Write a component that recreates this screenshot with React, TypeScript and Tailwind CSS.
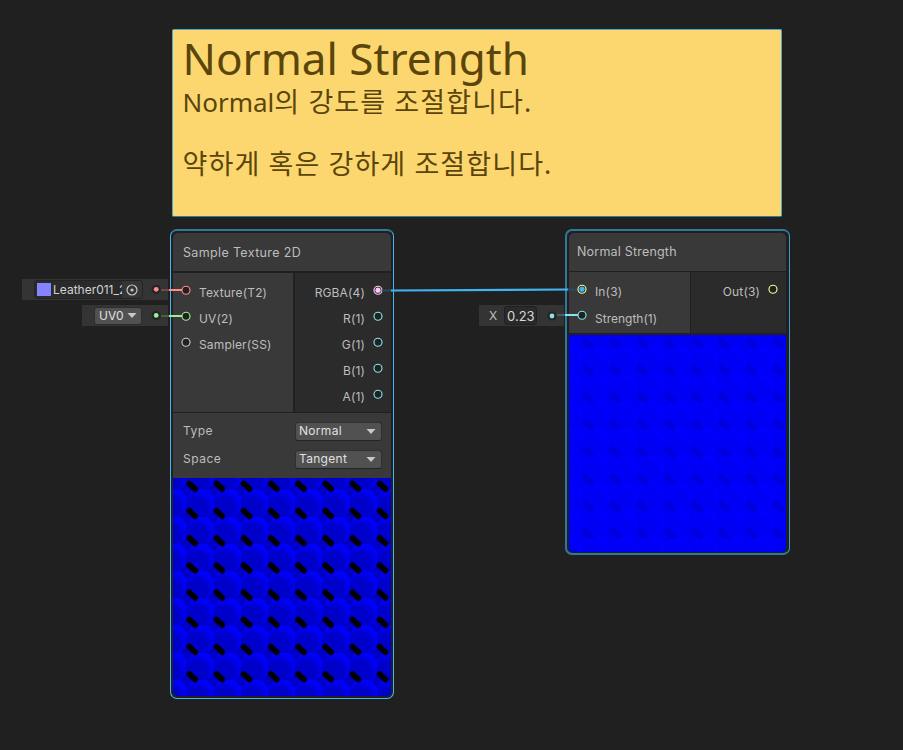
import type { ReactNode } from "react";

const RED = "#ff8b8b";
const GREEN = "#9aef92";
const CYAN = "#84e4e7";
const YELLOW = "#f6ff9a";
const PINK = "#fbcbf4";

function Ring({ color, fill }: { color: string; fill?: string }) {
  return (
    <svg width="10" height="10" viewBox="0 0 10 10" className="shrink-0 overflow-visible">
      <circle cx="5" cy="5.2" r="4" fill="#212121" stroke={color} strokeWidth="1.15" />
      {fill && <circle cx="5" cy="5.2" r="2.6" fill={fill} />}
    </svg>
  );
}

function Label({ children, className = "text-[12px] tracking-[0.15px]" }: { children: ReactNode; className?: string }) {
  return <span className={`whitespace-nowrap leading-[16px] text-[#bdbdbd] ${className}`}>{children}</span>;
}

function InPort({ color, fill, label, className }: { color: string; fill?: string; label: string; className?: string }) {
  return (
    <div className="flex h-[26px] items-start gap-[8px] pl-[8px]">
      <Ring color={color} fill={fill} />
      <Label className={className}>{label}</Label>
    </div>
  );
}

function OutPort({ color, fill, label }: { color: string; fill?: string; label: string }) {
  return (
    <div className="flex h-[26px] items-start justify-end gap-[8px] pr-[8px]">
      <Label>{label}</Label>
      <Ring color={color} fill={fill} />
    </div>
  );
}

function Caret() {
  return (
    <svg width="10" height="5" viewBox="0 0 10 5" className="shrink-0">
      <path d="M0.500 0h9L5 5z" fill="#c8c8c8" />
    </svg>
  );
}

function Dropdown({ label, value }: { label: string; value: string }) {
  return (
    <div className="flex h-[28px] items-center justify-between pl-[10px] pr-[9px]">
      <Label className="text-[12px] tracking-[0.5px]">{label}</Label>
      <div className="flex h-[19px] w-[87px] items-center justify-between rounded-[3px] border border-[#303030] border-b-[#242424] bg-[#515151] pl-[3px] pr-[5px]">
        <span className="text-[12px] leading-[16px] tracking-[0.3px] text-[#e0e0e0]">{value}</span>
        <Caret />
      </div>
    </div>
  );
}

type Palette = { gap: string; base: string; light: string; slug: string; halo: string; stud: string; studDark: string };

const STRONG: Palette = { gap: "#0000b8", base: "#0000cb", light: "#0000ff", slug: "#000000", halo: "#000090", stud: "#0000d0", studDark: "#0000a8" };
const FAINT: Palette = { gap: "#0000f0", base: "#0000f4", light: "#0000ff", slug: "#0000dc", halo: "#0000ea", stud: "#0000f4", studDark: "#0000ec" };

const PITCH = 27.2;
const STEPS = [-1, 0, 1, 2, 3, 4, 5, 6, 7, 8];
const CELLS = STEPS.flatMap((row) => STEPS.map((col) => ({ x: col * PITCH, y: row * PITCH })));

/* Shader preview: a grid of domes with studs and shadows in the gaps */
function Bumps({ id, palette, size }: { id: string; palette: Palette; size: number }) {
  return (
    <svg width={size} height={size} viewBox={`0 0 ${size} ${size}`} className="block shrink-0">
      <defs>
        <radialGradient id={`${id}-dome`} cx="0.36" cy="0.7" r="0.72">
          <stop offset="0" stopColor={palette.base} />
          <stop offset="0.55" stopColor={palette.base} />
          <stop offset="0.95" stopColor={palette.light} />
        </radialGradient>
        <linearGradient id={`${id}-stud`} x1="0.2" y1="0.1" x2="0.8" y2="0.9">
          <stop offset="0" stopColor={palette.stud} />
          <stop offset="0.5" stopColor={palette.stud} />
          <stop offset="1" stopColor={palette.studDark} />
        </linearGradient>
        <filter id={`${id}-soft`} filterUnits="userSpaceOnUse" x="-30" y="-30" width="280" height="280" colorInterpolationFilters="sRGB">
          <feGaussianBlur stdDeviation="0.65" />
        </filter>
      </defs>
      <rect width={size} height={size} fill={palette.gap} />
      <g filter={`url(#${id}-soft)`}>
        {CELLS.map(({ x, y }) => (
          <path
            key={`d${x},${y}`}
            transform={`translate(${x + 27.2} ${y + 25.2})`}
            d="M-6 -13.6H6Q12 -12 13.6 -6V6Q12 12 6 13.6H-6Q-12 12 -13.6 6V-6Q-12 -12 -6 -13.6Z"
            fill={`url(#${id}-dome)`}
          />
        ))}
        {CELLS.map(({ x, y }) => (
          <g key={`s${x},${y}`} transform={`translate(${x} ${y})`}>
            <path d="M16 5.5L22 11" stroke={palette.halo} strokeWidth="6.500" strokeLinecap="round" />
            <path d="M16.4 5.6L22.2 11" stroke={palette.slug} strokeWidth="5.4" strokeLinecap="round" />
            <circle cx="13.3" cy="13.8" r="3.5" fill={`url(#${id}-stud)`} />
          </g>
        ))}
      </g>
    </svg>
  );
}

export default function App() {
  return (
    <main className="relative h-[750px] w-[903px] overflow-hidden bg-[#202020] font-['Inter','Noto_Sans_CJK_KR',sans-serif]">
      {/* Sticky note */}
      <section className="absolute left-[172px] top-[29px] h-[188px] w-[610px] rounded-[2px] border border-[#4aa9cf] border-b-[#2f7da3] bg-[#fcd770] pl-[9.5px] text-[#5a450b] font-['Noto_Sans','Noto_Sans_CJK_KR',sans-serif]">
        <h1 className="mt-[1px] h-[55px] whitespace-nowrap text-[44px] leading-[54px]">Normal Strength</h1>
        <div className="whitespace-nowrap text-[27px] leading-[31px] tracking-[1.1px]">
          <p><span className="text-[26px] tracking-[0px]">Normal</span>의 강도를 조절합니다.</p>
          <p className="mt-[30px]">약하게 혹은 강하게 조절합니다.</p>
        </div>
      </section>

      {/* Sample Texture 2D node */}
      <section className="absolute left-[170px] top-[229px] h-[470px] w-[224px] rounded-[7px] border border-t-2 border-[#44b6f4] border-t-[#2f7a9c] bg-[#202020] p-[2px]">
        <div className="flex h-full flex-col overflow-hidden rounded-[5px]">
          <header className="flex h-[38px] shrink-0 items-center bg-[#393939] pl-[10px] pt-[2px]">
            <Label className="text-[12.5px] tracking-[0.35px]">Sample Texture 2D</Label>
          </header>
          <div className="mt-[2px] flex h-[139px] shrink-0">
            <div className="w-[120px] bg-[#393939] pt-[12px]">
              <InPort color={RED} label="Texture(T2)" />
              <InPort color={GREEN} label="UV(2)" />
              <InPort color="#c8c8c8" label="Sampler(SS)" />
            </div>
            <div className="ml-[2px] flex-1 bg-[#2b2b2b] pt-[12px]">
              <OutPort color={PINK} fill={PINK} label="RGBA(4)" />
              <OutPort color={CYAN} label="R(1)" />
              <OutPort color={CYAN} label="G(1)" />
              <OutPort color={CYAN} label="B(1)" />
              <OutPort color={CYAN} label="A(1)" />
            </div>
          </div>
          <div className="mt-[1px] h-[65px] shrink-0 bg-[#393939] pt-[4px]">
            <Dropdown label="Type" value="Normal" />
            <Dropdown label="Space" value="Tangent" />
          </div>
          <Bumps id="strong" palette={STRONG} size={218} />
        </div>
      </section>

      {/* Normal Strength node */}
      <section className="absolute left-[565px] top-[229px] h-[326px] w-[225px] rounded-[7px] border-2 border-r border-[#2f7a9c] border-r-[#3d9bc9] bg-[#202020] p-[2px] pb-px pr-[3px]">
        <div className="flex h-full flex-col overflow-hidden rounded-[5px]">
          <header className="flex h-[38px] shrink-0 items-center bg-[#393939] pl-[8px]">
            <Label className="text-[12.5px] tracking-[0.2px]">Normal Strength</Label>
          </header>
          <div className="mt-[1px] flex h-[61px] shrink-0">
            <div className="w-[121px] bg-[#393939] pt-[12px]">
              <InPort color={YELLOW} fill="#3fb5f5" label="In(3)" />
              <InPort color={CYAN} label="Strength(1)" className="pt-px text-[12px]" />
            </div>
            <div className="ml-px flex-1 bg-[#2b2b2b] pt-[12px]">
              <OutPort color={YELLOW} label="Out(3)" />
            </div>
          </div>
          <div className="mt-[2px]"><Bumps id="faint" palette={FAINT} size={217} /></div>
        </div>
      </section>

      {/* Inline port values */}
      <div className="absolute left-[22px] top-[279px] flex h-[21px] w-[146px] items-center bg-[#343434] pl-[12px]">
        <div className="flex h-[19px] w-[109px] items-center overflow-hidden rounded-[3px] border border-[#242424] bg-[#2a2a2a] pl-[2px]">
          <span className="h-[13px] w-[14px] shrink-0 bg-[#8484ff]" />
          <span className="ml-[2px] w-[69px] overflow-hidden whitespace-nowrap text-[12px] leading-[16px] text-[#d2d2d2]">Leather011_2K</span>
          <span className="flex h-full flex-1 items-center justify-center bg-[#353535]">
            <svg width="12" height="12" viewBox="0 0 12 12">
              <circle cx="6" cy="6" r="5" fill="none" stroke="#c4c4c4" strokeWidth="1.2" />
              <circle cx="6" cy="6" r="1.6" fill="#c4c4c4" />
            </svg>
          </span>
        </div>
      </div>
      <div className="absolute left-[82px] top-[305px] flex h-[21px] w-[86px] items-center bg-[#343434] pl-[12px]">
        <div className="flex h-[18px] w-[48px] items-center justify-between rounded-[3px] border border-[#2d2d2d] bg-[#515151] pl-[4px] pr-[4px]">
          <span className="text-[12px] leading-[16px] text-[#e0e0e0]">UV0</span>
          <Caret />
        </div>
      </div>
      <div className="absolute left-[479px] top-[305px] flex h-[21px] w-[85px] items-center bg-[#343434] pl-[10px]">
        <Label>X</Label>
        <div className="ml-[7px] flex h-[19px] w-[33px] items-center justify-center rounded-[3px] border border-[#202020] bg-[#2a2a2a] text-[13px] leading-[16px] text-[#d8d8d8]">0.23</div>
      </div>

      {/* Edges between ports */}
      <svg className="pointer-events-none absolute left-0 top-0" width="903" height="750" viewBox="0 0 903 750">
        {[["156.2", "289.3", RED], ["156.2", "315.4", GREEN], ["552", "316", CYAN]].map(([x, y, c]) => (
          <g key={x + y}>
            <circle cx={x} cy={y} r="4.6" fill="#242424" />
            <circle cx={x} cy={y} r="2.4" fill={c} />
          </g>
        ))}
        <path d="M161 290H170" stroke="#704a4a" strokeWidth="2" />
        <path d="M169 290H182" stroke={RED} strokeWidth="2" />
        <path d="M161 316H169" stroke="#49613f" strokeWidth="2" />
        <path d="M169 316H182" stroke={GREEN} strokeWidth="2" />
        <path d="M557 315H565" stroke="#416363" strokeWidth="2" />
        <path d="M565 315H578" stroke={CYAN} strokeWidth="2" />
        <path d="M382 290.500H392" stroke="#294a5a" strokeWidth="2" />
        <path d="M391 290.500L568 289.500" stroke="#3fb5f5" strokeWidth="2.2" />
        <path d="M568 289.500H577" stroke="#2b4b5c" strokeWidth="2" />
      </svg>
    </main>
  );
}
